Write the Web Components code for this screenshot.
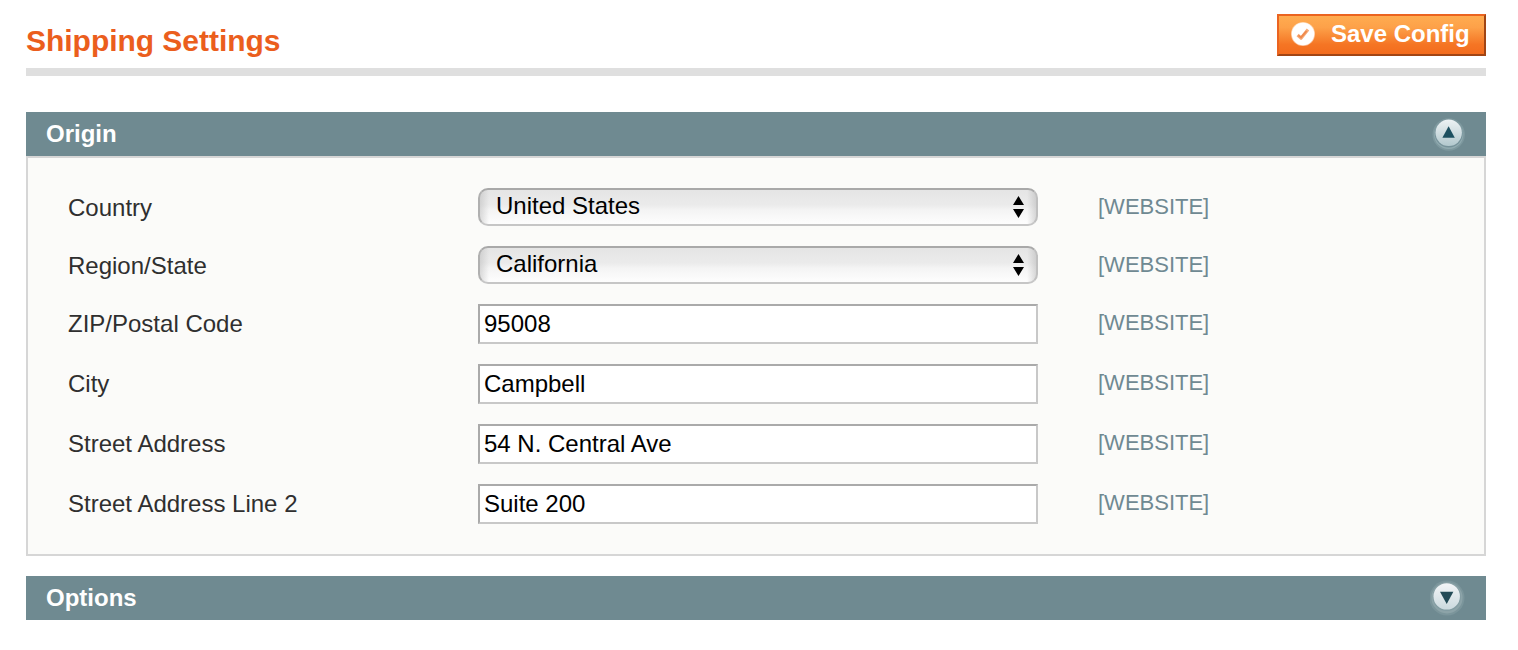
<!DOCTYPE html>
<html lang="en">
<head>
<meta charset="utf-8">
<title>Shipping Settings</title>
<style>
body { margin: 0; background: #fff; font-family: "Liberation Sans", Arial, sans-serif; font-size: 24px; color: #2f2f2f; }
</style>
</head>
<body>
<settings-page>
  <page-header slot="header">Shipping Settings<save-button slot="action">Save Config</save-button></page-header>
  <config-section open>
    <span slot="title">Origin</span>
    <config-row><span slot="label">Country</span><select-field>United States</select-field></config-row>
    <config-row><span slot="label">Region/State</span><select-field>California</select-field></config-row>
    <config-row><span slot="label">ZIP/Postal Code</span><text-field>95008</text-field></config-row>
    <config-row><span slot="label">City</span><text-field>Campbell</text-field></config-row>
    <config-row><span slot="label">Street Address</span><text-field>54 N. Central Ave</text-field></config-row>
    <config-row><span slot="label">Street Address Line 2</span><text-field>Suite 200</text-field></config-row>
  </config-section>
  <config-section><span slot="title">Options</span></config-section>
</settings-page>
<script>
const define = (name, html) => customElements.define(name, class extends HTMLElement {
  constructor() {
    super();
    this.attachShadow({ mode: 'open' }).innerHTML = html;
  }
});

define('settings-page', `
<style>
:host { display: block; box-sizing: border-box; width: 1518px; height: 650px; padding: 14px 32px 0 26px; overflow: hidden; }
main { display: flex; flex-direction: column; gap: 20px; margin-top: 36px; }
</style>
<slot name="header"></slot><main><slot></slot></main>`);

define('page-header', `
<style>
:host { display: flex; justify-content: space-between; box-sizing: border-box; height: 62px; border-bottom: 8px solid #dfdfdf; }
h1 { margin: 0; color: #eb5e1d; font-size: 30px; line-height: 53px; letter-spacing: -.03px; }
</style>
<h1><slot></slot></h1><slot name="action"></slot>`);

define('save-button', `
<style>
:host { display: block; font-weight: bold; }
button { display: flex; align-items: flex-start; box-sizing: border-box; width: 209px; height: 42px; margin: 0; padding: 0 0 0 12px;
  border: 2px solid; border-color: #eb6420 #a14514 #a14514 #eb6420;
  background: linear-gradient(#ffac50, #fda149 30%, #f57524 75%, #f36c1d); color: #fff; font: inherit; line-height: 35px; white-space: nowrap; }
svg { width: 24px; height: 24px; margin: 6px 16px 0 0; flex: none; }
</style>
<button><svg viewBox="0 0 24 24"><circle cx="12" cy="12" r="12" fill="#fff" opacity=".55"/><circle cx="12" cy="12" r="11.2" fill="#fff"/><path d="M6.6 13l3.4 3.2L17 7.6" fill="none" stroke="#f7ab78" stroke-width="3.2" stroke-linejoin="round"/><path d="M7.4 13.4l2.6 2L15.6 9" fill="none" stroke="#ef8a4c" stroke-width="1.8"/></svg><span><slot></slot></span></button>`);

define('config-section', `
<style>
:host { display: block; }
header { display: flex; justify-content: space-between; align-items: center; height: 44px; padding: 0 20px; background: #6f8a91; color: #fff; line-height: 44px; }
h2 { margin: 0; font-size: 24px; }
svg { width: 36px; height: 36px; }
.body { display: none; flex-direction: column; gap: 20px; padding: 30px 40px; border: 2px solid #d6d6d6; background: #fbfbf9; }
:host([open]) .body { display: flex; }
.down { display: block; }
.up { display: none; }
:host([open]) .down { display: none; }
:host([open]) .up { display: block; }
:host([open]) header { padding-right: 18px; }
</style>
<header><h2><slot name="title"></slot></h2>
<svg class="up" viewBox="0 0 36 36"><defs><linearGradient id="u" x2="0" y2="1"><stop stop-color="#edf2f4"/><stop offset="1" stop-color="#b2c8cd"/></linearGradient></defs>
<circle cx="16.7" cy="18.5" r="16.2" fill="#7d989e"/><circle cx="16.7" cy="18.5" r="14.6" fill="#91abb0"/><circle cx="16.7" cy="17.6" r="14" fill="#76929a"/><circle cx="16.7" cy="16.8" r="13.2" fill="url(#u)"/><path d="M16.6 10.3l6.2 11.4H10.4z" fill="#1d5060"/></svg>
<svg class="down" viewBox="0 0 36 36"><defs><linearGradient id="d" x2="0" y2="1"><stop stop-color="#f3f5f7"/><stop offset="1" stop-color="#cbd9de"/></linearGradient></defs>
<circle cx="17" cy="18" r="17.5" fill="#7b959b"/><circle cx="17" cy="17.8" r="15.6" fill="#8ca3a8"/><circle cx="16.8" cy="17" r="14" fill="#829ca2"/><circle cx="16.7" cy="16.4" r="13.2" fill="url(#d)"/><path d="M10 11.8h13.4L16.7 23.9z" fill="#244b57"/></svg>
</header><div class="body"><slot></slot></div>`);

define('config-row', `
<style>
:host { display: grid; grid-template-columns: 410px 560px auto; align-items: start; }
.label { height: 0; line-height: 40px; white-space: nowrap; }
.scope { height: 0; padding-left: 60px; font-size: 22px; line-height: 37px; color: #6f8992; }
</style>
<div class="label"><slot name="label"></slot></div><slot></slot><div class="scope">[WEBSITE]</div>`);

define('select-field', `
<style>
:host { display: flex; justify-content: space-between; box-sizing: border-box; height: 38px; padding: 0 11px 0 16px; border: 2px solid; border-color: #a9a9a9 #c0c0c0 #c6c6c6 #b0b0b0; border-radius: 10px;
  background: linear-gradient(90deg, rgba(185,185,185,.6), rgba(210,210,210,0) 11px, rgba(210,210,210,0) calc(100% - 11px), rgba(180,180,180,.6)) border-box, linear-gradient(#e4e4e4, #ebebeb 45%, #f4f4f4 58%, #fff) border-box;
  color: #000; line-height: 32px; }
svg { width: 12px; height: 22px; margin-top: 6px; }
</style>
<span><slot></slot></span><svg viewBox="0 0 12 22"><path d="M5.5 0L11 9H0zM5.5 22L0 13h11z"/></svg>`);

define('text-field', `
<style>
:host { display: block; box-sizing: border-box; height: 40px; padding-left: 4px; border: 2px solid; border-color: #aaa #c8c8c8 #c8c8c8 #aaa; background: #fff; color: #000; line-height: 36px; }
</style>
<slot></slot>`);
</script>
</body>
</html>
